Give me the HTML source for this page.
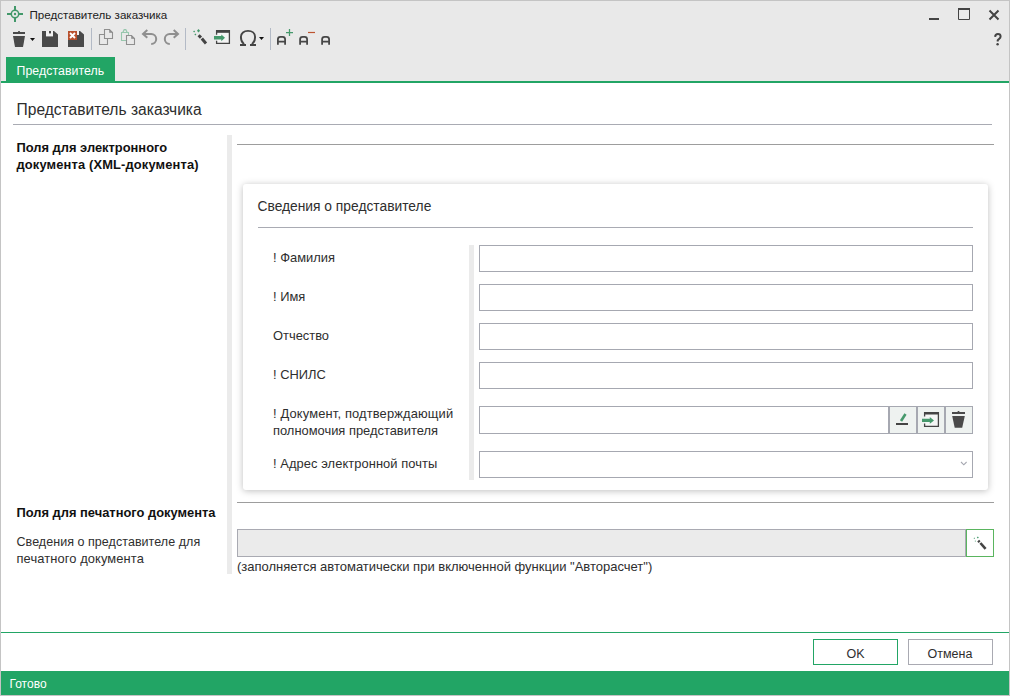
<!DOCTYPE html>
<html><head><meta charset="utf-8">
<style>
html,body{margin:0;padding:0;}
body{width:1010px;height:696px;overflow:hidden;position:relative;background:#fff;font-family:"Liberation Sans",sans-serif;color:#2e2e2e;}
.a{position:absolute;white-space:nowrap;line-height:1;}
.r{position:absolute;}
svg{position:absolute;overflow:visible;}
</style></head><body>
<!-- window frame -->
<div class="r" style="left:0;top:0;width:1008px;height:694px;border:1px solid #c4c4c4;"></div>
<!-- title + toolbar background -->
<div class="r" style="left:1px;top:1px;width:1008px;height:80px;background:#e9e9e9;"></div>
<div class="r" style="left:1px;top:81px;width:1008px;height:2px;background:#22a565;"></div>
<!-- tab -->
<div class="r" style="left:6px;top:57px;width:109px;height:24px;background:#22a565;"></div>
<span class="a" style="left:16.5px;top:64.6px;font-size:12.3px;letter-spacing:0.08px;color:#fff;">Представитель</span>

<!-- title -->
<span class="a" style="left:29.5px;top:9.2px;font-size:11.6px;color:#222;">Представитель заказчика</span>

<!-- toolbar icons -->
<svg style="left:0;top:0" width="1010" height="83" viewBox="0 0 1010 83">
 <!-- app icon -->
 <g fill="none" stroke="#42986a">
  <circle cx="15" cy="14" r="3.7" stroke-width="1.5"/>
  <path d="M15 6V10.3M15 17.7V22M7 14H11.3M18.7 14H23" stroke-width="2"/>
 </g>
 <circle cx="15" cy="14" r="1.2" fill="#42986a"/>
 <!-- trash -->
 <g fill="#4a4a4a">
  <rect x="13" y="32" width="12" height="2"/>
  <rect x="18" y="31" width="2" height="1.5" rx="0.7"/>
  <path d="M13 36H25L23 47H15Z"/>
  <path d="M30 38H35L32.5 41Z" fill="#111"/>
 </g>
 <!-- save -->
 <path d="M42 31H54L58 34.5V47H42Z" fill="#4a4a4a"/>
 <rect x="46" y="31" width="7" height="5.4" fill="#f2f2f2"/>
 <rect x="49" y="31" width="2" height="2.4" fill="#4a4a4a"/>
 <!-- save close -->
 <path d="M68 31H80L84 34.5V47H68Z" fill="#4a4a4a"/>
 <rect x="77" y="31" width="2" height="4" fill="#f2f2f2"/>
 <rect x="68" y="31" width="9" height="9" fill="#b8512e"/>
 <path d="M70 33L75 38M75 33L70 38" stroke="#fff" stroke-width="1.9"/>
 <!-- separators -->
 <g fill="#b3bac6">
  <rect x="91" y="28" width="1" height="22"/>
  <rect x="185" y="28" width="1" height="22"/>
  <rect x="270" y="28" width="1" height="22"/>
 </g>
 <!-- copy -->
 <g fill="#e9e9e9" stroke="#8f8f8f" stroke-width="1.1">
  <path d="M99.5 34.5H107.5V44.5H99.5Z"/>
  <path d="M104.5 29.5H109.5L112.5 32.5V38.5H104.5Z"/>
  <path d="M109.5 29.5L112.5 32.5H109.5Z" fill="#8f8f8f" stroke-width="0.6"/>
 </g>
 <!-- paste -->
 <g fill="none" stroke="#97c7ad" stroke-width="1.1">
  <path d="M121.5 32.5H128.5V40.5H121.5Z"/>
  <path d="M122.8 32.5L124.2 29.7H125.8L127.2 32.5" stroke-width="1.2"/>
 </g>
 <g fill="#e9e9e9" stroke="#8f8f8f" stroke-width="1.1">
  <path d="M126.5 35.5H131.5L134.5 38.5V44.5H126.5Z"/>
  <path d="M131.5 35.5L134.5 38.5H131.5Z" fill="#8f8f8f" stroke-width="0.6"/>
 </g>
 <!-- undo redo -->
 <g fill="none" stroke="#8f8f8f" stroke-width="2">
  <path d="M147.3 30L143 33.9L147.3 37.8M143 33.9H151.2A5 5 0 0 1 151.2 43.9"/>
  <path d="M173.7 30L178 33.9L173.7 37.8M178 33.9H169.8A5 5 0 0 0 169.8 43.9"/>
 </g>
 <!-- wand -->
 <g fill="#46996c">
  <path d="M198.5 29L200 30.7L198.5 32.4L197 30.7Z"/>
  <path d="M194.1 30.4L195.1 31.4L194.1 32.4L193.1 31.4Z"/>
  <path d="M195.4 33.6L196.4 34.6L195.4 35.6L194.4 34.6Z"/>
 </g>
 <path d="M198.6 35.2L201 37.6" stroke="#444" stroke-width="3"/>
 <path d="M201.8 38.6L206 43.4" stroke="#444" stroke-width="3"/>
 <!-- import -->
 <rect x="217" y="33" width="12" height="10" fill="#f4f4f4"/>
 <path d="M216.6 34.8V30.6H229.4V43.4H216.6V40.7" fill="none" stroke="#444" stroke-width="1.3"/>
 <rect x="216" y="30" width="14" height="2.8" fill="#444"/>
 <path d="M214 35.9H221.3V34.4L225 37.8L221.3 41.2V39.6H214Z" fill="#46996c"/>
 <!-- omega -->
 <path d="M243.5 45V43.5C241.5 42 240.9 39.5 240.9 37C240.9 33 244 30.9 248 30.9C252 30.9 255.1 33 255.1 37C255.1 39.5 254.5 42 252.5 43.5V45" fill="none" stroke="#444" stroke-width="1.9"/>
 <rect x="240" y="44" width="6" height="2" fill="#444"/>
 <rect x="250" y="44" width="6" height="2" fill="#444"/>
 <path d="M259 37H264L261.5 40Z" fill="#111"/>
 <!-- A+ A- A -->
 <g fill="none" stroke="#474747" stroke-width="1.8">
  <path d="M277.9 44.8V39.3Q277.9 36.8 280.4 36.8H282.6Q285.1 36.8 285.1 39.3V44.8M277.9 41.6H285.1"/>
  <path d="M300.1 44.8V39.3Q300.1 36.8 302.6 36.8H304.6Q307.1 36.8 307.1 39.3V44.8M300.1 41.6H307.1"/>
  <path d="M322.1 44.8V39.3Q322.1 36.8 324.6 36.8H326.6Q329.1 36.8 329.1 39.3V44.8M322.1 41.6H329.1"/>
 </g>
 <path d="M286 32.5H293M289.5 29V36" stroke="#46996c" stroke-width="1.25"/>
 <path d="M308 32.5H315" stroke="#bd5430" stroke-width="1.2"/>
 <!-- window controls -->
 <rect x="929" y="18" width="10" height="2" fill="#444"/>
 <path d="M958.5 9H969.5V19.5H958.5Z" fill="none" stroke="#444" stroke-width="1"/>
 <rect x="958" y="8" width="12" height="2" fill="#444"/>
 <path d="M989.5 10.5L998.5 19.5M998.5 10.5L989.5 19.5" stroke="#444" stroke-width="2"/>
</svg>
<svg style="left:0;top:0" width="1010" height="60" viewBox="0 0 1010 60"><path d="M995.1 36.8C995.3 34.7 996.3 34 997.9 34C999.6 34 1000.6 35 1000.6 36.4C1000.6 38.3 998.7 38.9 997.7 40.4V41.6" fill="none" stroke="#444" stroke-width="2"/><circle cx="997.6" cy="44.2" r="1.2" fill="#444"/></svg>

<!-- content -->
<span class="a" style="left:16.5px;top:101.8px;font-size:15.6px;color:#2e2e2e;">Представитель заказчика</span>
<div class="r" style="left:13px;top:124px;width:979px;height:1px;background:#a9abb3;"></div>

<span class="a" style="left:16.5px;top:142.1px;font-size:12.9px;font-weight:700;color:#111;">Поля для электронного</span>
<span class="a" style="left:16.5px;top:158.9px;font-size:12.9px;letter-spacing:0.14px;font-weight:700;color:#111;">документа (XML-документа)</span>

<div class="r" style="left:227px;top:135px;width:5px;height:439px;background:#ebebeb;"></div>
<div class="r" style="left:237px;top:144px;width:757px;height:1px;background:#9d9d9d;"></div>

<!-- card -->
<div class="r" style="left:243px;top:184px;width:745px;height:306px;background:#fff;border-radius:3px;box-shadow:0 1px 7px rgba(0,0,0,0.26);"></div>
<span class="a" style="left:257.5px;top:199.7px;font-size:13.8px;color:#2e2e2e;">Сведения о представителе</span>
<div class="r" style="left:258px;top:227px;width:715px;height:1px;background:#a9abb3;"></div>

<div class="r" style="left:469px;top:245px;width:5px;height:235px;background:#ebebeb;"></div>

<span class="a" style="left:273px;top:252.1px;font-size:12.9px;">! Фамилия</span>
<span class="a" style="left:273px;top:291.1px;font-size:12.9px;">! Имя</span>
<span class="a" style="left:273px;top:330.1px;font-size:12.9px;">Отчество</span>
<span class="a" style="left:273px;top:369.1px;font-size:12.9px;">! СНИЛС</span>
<span class="a" style="left:273px;top:407.9px;font-size:12.9px;letter-spacing:0.15px;">! Документ, подтверждающий</span>
<span class="a" style="left:273px;top:425.3px;font-size:12.9px;">полномочия представителя</span>
<span class="a" style="left:273px;top:457.8px;font-size:12.9px;letter-spacing:0.07px;">! Адрес электронной почты</span>

<div class="r" style="left:479px;top:245px;width:492px;height:25px;border:1px solid #a6a8b1;"></div>
<div class="r" style="left:479px;top:284px;width:492px;height:25px;border:1px solid #a6a8b1;"></div>
<div class="r" style="left:479px;top:323px;width:492px;height:25px;border:1px solid #a6a8b1;"></div>
<div class="r" style="left:479px;top:362px;width:492px;height:25px;border:1px solid #a6a8b1;"></div>

<!-- doc row -->
<div class="r" style="left:479px;top:406px;width:408px;height:26px;border:1px solid #a6a8b1;"></div>
<div class="r" style="left:889px;top:406px;width:26px;height:26px;border:1px solid #a6a8b1;background:#eef2f0;"></div>
<div class="r" style="left:917px;top:406px;width:26px;height:26px;border:1px solid #a6a8b1;background:#eef2f0;"></div>
<div class="r" style="left:945px;top:406px;width:26px;height:26px;border:1px solid #a6a8b1;background:#eef2f0;"></div>

<!-- email -->
<div class="r" style="left:479px;top:451px;width:492px;height:25px;border:1px solid #a6a8b1;"></div>

<!-- print section -->
<div class="r" style="left:237px;top:502px;width:757px;height:1px;background:#9d9d9d;"></div>
<span class="a" style="left:16.5px;top:507.1px;font-size:12.9px;font-weight:700;color:#111;">Поля для печатного документа</span>
<span class="a" style="left:16.5px;top:535.6px;font-size:12.5px;letter-spacing:0.05px;">Сведения о представителе для</span>
<span class="a" style="left:16.5px;top:553.3px;font-size:12.9px;letter-spacing:0.1px;">печатного документа</span>
<div class="r" style="left:237px;top:529px;width:727px;height:26px;border:1px solid #a9aab2;background:#ebebeb;"></div>
<div class="r" style="left:966px;top:529px;width:26px;height:26px;border:1px solid #5ab55f;background:#fff;"></div>
<span class="a" style="left:237px;top:559.5px;font-size:13px;">(заполняется автоматически при включенной функции "Авторасчет")</span>

<!-- field icons -->
<svg style="left:0;top:0" width="1010" height="696" viewBox="0 0 1010 696">
 <rect x="896" y="423" width="12" height="2" fill="#444"/>
 <path d="M905.5 414L901 421" stroke="#46996c" stroke-width="2.6"/>
 <rect x="925" y="414" width="13" height="12" fill="#f4f6f5"/>
 <path d="M924.6 416.4V412.6H938.4V426.4H924.6V423.6" fill="none" stroke="#444" stroke-width="1.3"/>
 <rect x="924" y="412" width="15" height="2.5" fill="#444"/>
 <path d="M922 418.8H929.8V416.9L934 420.4L929.8 423.8V422H922Z" fill="#46996c"/>
 <rect x="952" y="412" width="13" height="2" fill="#4a4a4a"/>
 <rect x="957.5" y="411" width="2" height="1.5" rx="0.7" fill="#4a4a4a"/>
 <path d="M952.2 416H964.8L962.2 427.8H954.7Z" fill="#4a4a4a"/>
 <path d="M961 462L963.8 464.8L966.6 462" fill="none" stroke="#a6a8b1" stroke-width="1.1"/>
 <g fill="#46996c">
  <path d="M977.8 536.6L978.8 537.6L977.8 538.6L976.8 537.6Z"/>
  <path d="M974.3 537.6L975 538.3L974.3 539L973.6 538.3Z"/>
  <path d="M975.3 540.4L976 541.1L975.3 541.8L974.6 541.1Z"/>
 </g>
 <path d="M978.2 540.6L979.6 542.1" stroke="#444" stroke-width="2.6"/>
 <path d="M980.4 543L985.6 548.8" stroke="#444" stroke-width="2.6"/>
</svg>

<!-- bottom -->
<div class="r" style="left:1px;top:632px;width:1008px;height:1px;background:#22a565;"></div>
<div class="r" style="left:813px;top:639px;width:83px;height:24px;border:1px solid #22a565;background:#fff;"></div>
<div class="r" style="left:908px;top:639px;width:83px;height:24px;border:1px solid #a9aab2;background:#fff;"></div>
<span class="a" style="left:846.5px;top:648.2px;font-size:12.5px;">OK</span>
<span class="a" style="left:927.5px;top:648.2px;font-size:12.5px;">Отмена</span>

<div class="r" style="left:1px;top:671px;width:1008px;height:24px;background:#22a565;"></div>
<span class="a" style="left:9.5px;top:677.8px;font-size:12px;color:#fff;">Готово</span>

</body></html>
